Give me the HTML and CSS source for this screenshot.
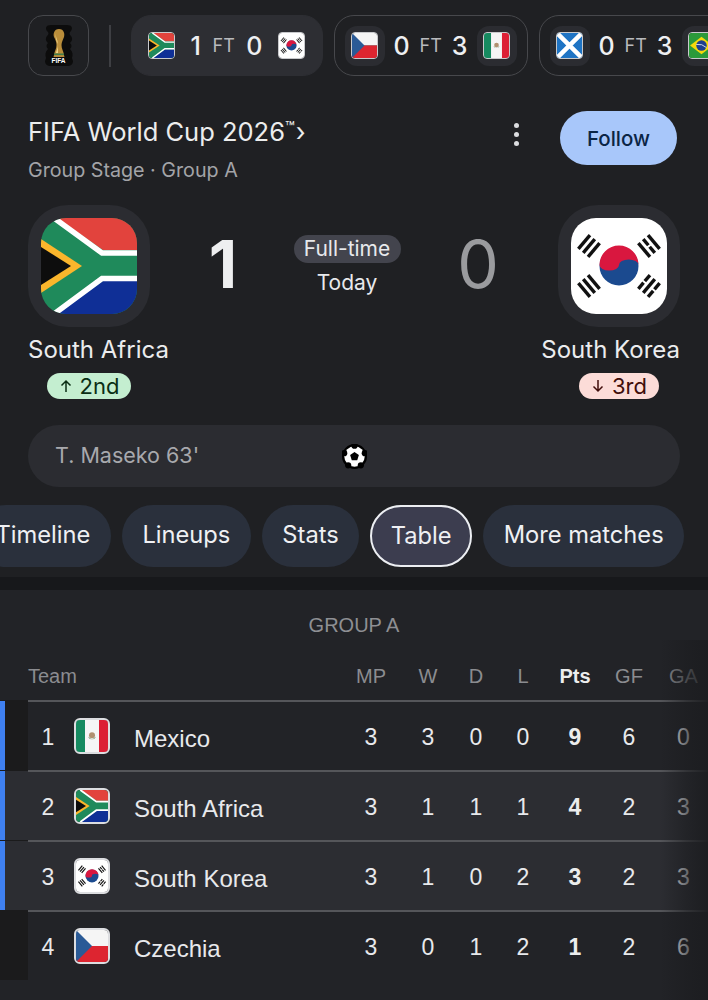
FILE: index.html
```html
<!DOCTYPE html>
<html lang="en">
<head>
<meta charset="utf-8">
<title>FIFA World Cup 2026</title>
<link rel="stylesheet" href="styles.css">
</head>
<body>
<svg class="defs" width="0" height="0" aria-hidden="true">
  <defs>
    <symbol id="f-za" viewBox="0 0 96 96" preserveAspectRatio="none">
      <rect width="96" height="96" fill="#1f8a5b"/>
      <polygon points="16,0 96,0 96,32 62,32" fill="#e2433d"/>
      <polygon points="16,96 96,96 96,63 62,63" fill="#0f2f96"/>
      <polyline points="13,0 61,35 96,35" fill="none" stroke="#fff" stroke-width="5.5"/>
      <polyline points="13,96 61,60.5 96,60.5" fill="none" stroke="#fff" stroke-width="5.5"/>
      <polygon points="0,21 41,48 0,75" fill="#fbb62c"/>
      <polygon points="0,29 30,48 0,67" fill="#0d0d0d"/>
    </symbol>
    <symbol id="f-kr" viewBox="0 0 96 96" preserveAspectRatio="none">
      <rect width="96" height="96" fill="#fff"/>
      <circle cx="48" cy="48" r="19.5" fill="#1b4a8f"/>
      <path d="M28.5 47 A19.5 19.5 0 0 1 67.5 47 A9.75 5.5 0 0 0 48 47 A9.75 5.5 0 0 1 28.5 47Z" fill="#d9173f"/>
      <g fill="#111">
        <g transform="translate(18 28) rotate(-50)">
          <rect x="-9" y="-8" width="18" height="3.4"/><rect x="-9" y="-1.7" width="18" height="3.4"/><rect x="-9" y="4.6" width="18" height="3.4"/>
        </g>
        <g transform="translate(78 28) rotate(50)">
          <rect x="-9" y="-8" width="18" height="3.4"/><rect x="-9" y="-1.7" width="8" height="3.4"/><rect x="1" y="-1.7" width="8" height="3.4"/><rect x="-9" y="4.6" width="18" height="3.4"/>
        </g>
        <g transform="translate(18 68) rotate(50)">
          <rect x="-9" y="-8" width="18" height="3.4"/><rect x="-9" y="-1.7" width="18" height="3.4"/><rect x="-9" y="4.6" width="18" height="3.4"/>
        </g>
        <g transform="translate(78 68) rotate(-50)">
          <rect x="-9" y="-8" width="8" height="3.4"/><rect x="1" y="-8" width="8" height="3.4"/><rect x="-9" y="-1.7" width="18" height="3.4"/><rect x="-9" y="4.6" width="8" height="3.4"/><rect x="1" y="4.6" width="8" height="3.4"/>
        </g>
      </g>
    </symbol>
    <symbol id="f-mx" viewBox="0 0 96 96" preserveAspectRatio="none">
      <rect width="96" height="96" fill="#f5f5f5"/>
      <rect width="27" height="96" fill="#168a60"/>
      <rect x="69" width="27" height="96" fill="#dc1f35"/>
      <circle cx="48" cy="46" r="9" fill="#b09070"/>
      <path d="M36 50 A13 13 0 0 0 60 50 L56 52 A9 9 0 0 1 40 52Z" fill="#7f9b7a"/>
    </symbol>
    <symbol id="f-cz" viewBox="0 0 96 96" preserveAspectRatio="none">
      <rect width="96" height="48" fill="#f5f5f5"/>
      <rect y="48" width="96" height="48" fill="#dd2530"/>
      <polygon points="0,0 48,48 0,96" fill="#2a5a96"/>
    </symbol>
    <symbol id="f-sc" viewBox="0 0 96 96" preserveAspectRatio="none">
      <rect width="96" height="96" fill="#1f74c4"/>
      <path d="M0 0 L96 96 M96 0 L0 96" stroke="#fff" stroke-width="17"/>
    </symbol>
    <symbol id="f-br" viewBox="0 0 96 96" preserveAspectRatio="none">
      <rect width="96" height="96" fill="#2b9a3a"/>
      <polygon points="48,14 92,48 48,82 4,48" fill="#f5d90a"/>
      <circle cx="48" cy="48" r="20" fill="#1d3f8f"/>
      <path d="M28 44 Q50 40 67 56" fill="none" stroke="#fff" stroke-width="3"/>
    </symbol>
    <symbol id="cup" viewBox="0 0 28 41">
      <path d="M6 0 H22 C27 0 28 3 26 6 C24 8 24 9 26 11 C28 14 27 16 25 18 C27 20 27 22 25 24 C28 27 28 30 27 33 L28 36 C28 39 26 41 22 41 H6 C2 41 0 39 0 36 L1 33 C0 30 0 27 3 24 C1 22 1 20 3 18 C1 16 0 14 2 11 C4 9 4 8 2 6 C0 3 1 0 6 0Z" fill="#0c0c0c"/>
      <path d="M14 4 C9 4 8 9 9 12 C10.5 15 11.5 17 11.5 20 C11.5 24 9.5 26 9 30 L8.5 32 H19.5 L19 30 C18.5 26 16.5 24 16.5 20 C16.5 17 18 15 19 12 C20 9 19 4 14 4Z" fill="#b98d3a"/>
      <path d="M12 6 C10 9 11 12 12.5 16 L13 28 L11 28 C11.5 25 13 23 12.5 19 C11 14 9.5 10 12 6Z" fill="#f1d68c"/>
      <rect x="9" y="28.5" width="10" height="1.6" fill="#3f7d4a"/>
    </symbol>
  </defs>
</svg>

<nav class="strip">
  <div class="logo-box">
    <div class="cup-wrap">
      <svg class="cup" aria-hidden="true"><use href="#cup"/></svg>
      <span class="cup-text">FIFA</span>
    </div>
  </div>
  <span class="sep"></span>
  <div class="chip chip-active">
    <span class="tile tile-plain"><svg class="mini"><use href="#f-za"/></svg></span>
    <span class="line"><b>1</b><i>FT</i><b>0</b></span>
    <span class="tile tile-plain"><svg class="mini"><use href="#f-kr"/></svg></span>
  </div>
  <div class="chip">
    <span class="tile"><svg class="mini"><use href="#f-cz"/></svg></span>
    <span class="line"><b>0</b><i>FT</i><b>3</b></span>
    <span class="tile"><svg class="mini"><use href="#f-mx"/></svg></span>
  </div>
  <div class="chip">
    <span class="tile"><svg class="mini"><use href="#f-sc"/></svg></span>
    <span class="line"><b>0</b><i>FT</i><b>3</b></span>
    <span class="tile"><svg class="mini"><use href="#f-br"/></svg></span>
  </div>
</nav>

<header class="head">
  <div class="head-text">
    <h1 class="title">FIFA World Cup 2026<sup class="tm">™</sup><span class="chev">›</span></h1>
    <p class="sub">Group Stage · Group A</p>
  </div>
  <span class="kebab"><span></span><span></span><span></span></span>
  <button class="follow">Follow</button>
</header>

<section class="match">
  <div class="team team-l">
    <div class="crest"><svg class="crest-flag"><use href="#f-za"/></svg></div>
    <div class="team-name">South Africa</div>
    <div class="rank rank-up">
      <svg class="arrow" viewBox="0 0 14 14"><path d="M7 13V2M2.5 6.5 7 2l4.5 4.5" fill="none" stroke="currentColor" stroke-width="1.5"/></svg>2nd
    </div>
  </div>
  <div class="scoreboard">
    <div class="score score-win">1</div>
    <div class="status">
      <span class="pill">Full-time</span>
      <span class="today">Today</span>
    </div>
    <div class="score score-lose">0</div>
  </div>
  <div class="team team-r">
    <div class="crest"><svg class="crest-flag"><use href="#f-kr"/></svg></div>
    <div class="team-name">South Korea</div>
    <div class="rank rank-down">
      <svg class="arrow" viewBox="0 0 14 14"><path d="M7 1v11M2.5 7.5 7 12l4.5-4.5" fill="none" stroke="currentColor" stroke-width="1.5"/></svg>3rd
    </div>
  </div>
</section>

<div class="scorers">
  <span class="scorer">T. Maseko 63'</span>
  <svg class="ball" viewBox="0 0 24 24" aria-hidden="true">
    <circle cx="12" cy="12" r="12" fill="#000"/>
    <circle cx="12" cy="12" r="9.8" fill="#fff"/>
    <g fill="#000">
      <circle cx="12" cy="1.6" r="3"/><circle cx="21.9" cy="8.8" r="3"/><circle cx="18.1" cy="20.4" r="3"/><circle cx="5.9" cy="20.4" r="3"/><circle cx="2.1" cy="8.8" r="3"/>
      <polygon points="12,7.6 16.2,10.6 14.6,15.6 9.4,15.6 7.8,10.6"/>
    </g>
  </svg>
</div>

<div class="tabs">
  <div class="tabs-track">
    <span class="tab">Timeline</span>
    <span class="tab">Lineups</span>
    <span class="tab">Stats</span>
    <span class="tab tab-on">Table</span>
    <span class="tab">More matches</span>
  </div>
</div>

<section class="panel">
  <h2 class="group">GROUP A</h2>
  <div class="t-head">
    <span class="t-team">Team</span>
    <span class="c c1">MP</span><span class="c c2">W</span><span class="c c3">D</span><span class="c c4">L</span><span class="c c5 strong">Pts</span><span class="c c6">GF</span><span class="c c7">GA</span>
  </div>

  <div class="row row-q">
    <span class="accent"></span><span class="gutter"></span>
    <div class="cells">
      <span class="pos">1</span><svg class="tflag"><use href="#f-mx"/></svg><span class="nm">Mexico</span>
      <span class="c c1">3</span><span class="c c2">3</span><span class="c c3">0</span><span class="c c4">0</span><span class="c c5 strong">9</span><span class="c c6">6</span><span class="c c7">0</span>
    </div>
  </div>
  <div class="row row-q row-hi">
    <span class="accent"></span><span class="gutter"></span>
    <div class="cells">
      <span class="pos">2</span><svg class="tflag"><use href="#f-za"/></svg><span class="nm">South Africa</span>
      <span class="c c1">3</span><span class="c c2">1</span><span class="c c3">1</span><span class="c c4">1</span><span class="c c5 strong">4</span><span class="c c6">2</span><span class="c c7">3</span>
    </div>
  </div>
  <div class="row row-q row-hi">
    <span class="accent"></span><span class="gutter"></span>
    <div class="cells">
      <span class="pos">3</span><svg class="tflag"><use href="#f-kr"/></svg><span class="nm">South Korea</span>
      <span class="c c1">3</span><span class="c c2">1</span><span class="c c3">0</span><span class="c c4">2</span><span class="c c5 strong">3</span><span class="c c6">2</span><span class="c c7">3</span>
    </div>
  </div>
  <div class="row">
    <span class="accent"></span><span class="gutter"></span>
    <div class="cells">
      <span class="pos">4</span><svg class="tflag"><use href="#f-cz"/></svg><span class="nm">Czechia</span>
      <span class="c c1">3</span><span class="c c2">0</span><span class="c c3">1</span><span class="c c4">2</span><span class="c c5 strong">1</span><span class="c c6">2</span><span class="c c7">6</span>
    </div>
  </div>
  <div class="fade"></div>
</section>
</body>
</html>
```

FILE: styles.css
```css
* { box-sizing: border-box; }
html, body { margin: 0; padding: 0; }
body {
  width: 708px;
  height: 1000px;
  overflow: hidden;
  background: #1f2023;
  color: #e8e9ec;
  font-family: "Inter", "Liberation Sans", sans-serif;
}
.defs { position: absolute; }

/* top strip */
.strip {
  display: flex;
  align-items: center;
  height: 61px;
  margin: 15px 0 35px;
  padding-left: 28px;
  overflow: hidden;
}
.logo-box {
  flex: none;
  width: 61px;
  height: 61px;
  border: 1.5px solid #47484c;
  border-radius: 15px;
  display: flex;
  align-items: center;
  justify-content: center;
}
.cup-wrap { position: relative; width: 28px; height: 41px; }
.cup { display: block; width: 28px; height: 41px; }
.cup-text {
  position: absolute;
  left: 0; right: 0; bottom: 2px;
  text-align: center;
  font: 700 6.5px/7px "Liberation Sans", sans-serif;
  color: #fff;
}
.sep { flex: none; width: 1.5px; height: 42px; margin: 0 20px 0 20px; background: #3e3f43; }
.chip {
  flex: none;
  width: 194px;
  height: 61px;
  margin-right: 11px;
  padding: 0 10px;
  border: 1.5px solid #47484c;
  border-radius: 20px;
  display: flex;
  align-items: center;
}
.chip-active { width: 192px; background: #2d2e33; border-color: #2d2e33; }
.tile {
  flex: none;
  width: 40px;
  height: 40px;
  border-radius: 12px;
  background: #2b2c31;
  display: flex;
  align-items: center;
  justify-content: center;
}
.tile-plain { background: transparent; }
.mini {
  display: block;
  width: 27px;
  height: 27px;
  border: 1.5px solid #c8c9cc;
  border-radius: 4px;
}
.line {
  flex: 1;
  display: flex;
  align-items: center;
  justify-content: space-between;
  padding: 0 9px;
}
.line b { font-weight: 500; font-size: 25px; line-height: 30px; color: #eeeff1; }
.line i { font-style: normal; font-size: 18px; color: #b9babd; }

/* header */
.head { display: flex; align-items: flex-start; padding: 0 31px 0 28px; margin-bottom: 18px; }
.head-text { flex: 1; }
.title { margin: 0; font-weight: 400; font-size: 25.5px; line-height: 42px; color: #eceded; white-space: nowrap; }
.tm { font-size: 16px; line-height: 0; vertical-align: 8px; }
.chev { margin-left: 1px; }
.sub { margin: 0; font-size: 19.7px; line-height: 34px; color: #a3a4a8; }
.kebab {
  display: flex;
  flex-direction: column;
  gap: 4px;
  margin: 12px 41px 0 0;
}
.kebab span { width: 5px; height: 5px; border-radius: 50%; background: #dcdde0; }
.follow {
  width: 117px;
  height: 54px;
  border: 0;
  border-radius: 27px;
  background: #a8c7fa;
  color: #0b2545;
  font: 500 20.5px "Inter", sans-serif;
}

/* match */
.match { display: grid; grid-template-columns: 140px 1fr 140px; padding: 0 28px; }
.team { display: flex; flex-direction: column; }
.team-l { align-items: flex-start; }
.team-r { align-items: flex-end; }
.crest {
  width: 122px;
  height: 122px;
  border-radius: 40px;
  background: #2b2c31;
  display: flex;
  align-items: center;
  justify-content: center;
}
.crest-flag { display: block; width: 96px; height: 96px; border-radius: 25px; }
.team-name { margin-top: 5px; font-size: 24px; line-height: 36px; white-space: nowrap; color: #ebecee; }
.rank {
  margin-top: 5px;
  height: 26px;
  border-radius: 13px;
  display: flex;
  align-items: center;
  justify-content: center;
  gap: 7px;
  font-size: 22px;
}
.rank-up { width: 84px; margin-left: 19px; background: #c4eed0; color: #0a2e14; }
.rank-down { width: 80px; margin-right: 21px; background: #fcdcd8; color: #410e0b; }
.arrow { width: 14px; height: 14px; }
.scoreboard {
  display: grid;
  grid-template-columns: 110px 138px 124px;
  align-items: start;
  text-align: center;
}
.score { font-size: 66px; line-height: 118px; }
.score-win { font-weight: 700; color: #eeeff0; }
.score-lose { font-weight: 400; color: #9a9b9e; }
.status { display: flex; flex-direction: column; align-items: center; padding-top: 30px; }
.pill {
  height: 28px;
  width: 107px;
  border-radius: 14px;
  background: #43444d;
  font-size: 21px;
  line-height: 28px;
}
.today { margin-top: 6px; font-size: 21px; line-height: 28px; }

/* scorers */
.scorers {
  position: relative;
  margin: 26px 28px 18px;
  height: 62px;
  border-radius: 31px;
  background: #2b2c31;
  display: flex;
  align-items: center;
  padding-left: 27px;
}
.scorer { font-size: 21.5px; color: #a8a9ad; margin-top: -2px; }
.ball { position: absolute; left: 314px; top: 19px; width: 25px; height: 25px; }

/* tabs */
.tabs { height: 62px; overflow: hidden; margin-bottom: 10px; }
.tabs-track { display: flex; gap: 11px; margin-left: -25px; }
.tab {
  flex: none;
  height: 62px;
  padding: 0 20.5px;
  border-radius: 31px;
  background: #2a303c;
  font-size: 23.7px;
  line-height: 60px;
  color: #eff0f3;
}
.tab-on { background: #3c3d4f; border: 2px solid #eceef2; line-height: 58px; padding: 0 18.5px; }

/* table */
.panel {
  position: relative;
  border-top: 13px solid #17181b;
  background: #222327;
  height: 423px;
  font-family: "Liberation Sans", sans-serif;
}
.group {
  margin: 0;
  padding-top: 10px;
  height: 60px;
  font-weight: 400;
  font-size: 20px;
  line-height: 50px;
  text-align: center;
  color: #8e8f93;
}
.t-head {
  display: flex;
  align-items: center;
  height: 50px;
  padding: 2px 0 0 28px;
  font-size: 20px;
  color: #8b8c90;
}
.t-team { flex: 1; }
.c { flex: none; text-align: center; }
.c1 { width: 56px; } .c2 { width: 58px; } .c3 { width: 38px; } .c4 { width: 56px; }
.c5 { width: 48px; } .c6 { width: 60px; } .c7 { width: 49px; }
.strong { font-weight: 700; color: #eceded; }
.row { display: flex; height: 70px; background: #222327; }
.row-hi { background: #2c2d32; }
.accent { flex: none; width: 5px; border-top: 1px solid #1b1b1c; background: #1b1b1c; }
.row-q .accent { background: #3f80f0; }
.gutter { flex: none; width: 23px; border-top: 1px solid #1b1b1c; background: #1b1b1c; }
.row-hi .gutter { background: #2c2d32; }
.cells {
  flex: 1;
  display: flex;
  align-items: center;
  border-top: 2px solid #55565a;
  font-size: 23px;
  color: #e8e9ec;
}
.cells .c, .pos { padding-top: 2px; }
.pos { flex: none; width: 40px; text-align: center; }
.tflag {
  flex: none;
  width: 36px;
  height: 36px;
  margin-left: 6px;
  border: 2px solid #dcdde0;
  border-radius: 6px;
}
.nm { flex: 1; margin-left: 24px; font-size: 24px; padding-top: 5px; }
.fade {
  position: absolute;
  top: 50px; right: 0; bottom: 0;
  width: 48px;
  background: linear-gradient(90deg, rgba(28,29,32,0), rgba(28,29,32,.6) 55%, rgba(28,29,32,.95));
  pointer-events: none;
}
```
